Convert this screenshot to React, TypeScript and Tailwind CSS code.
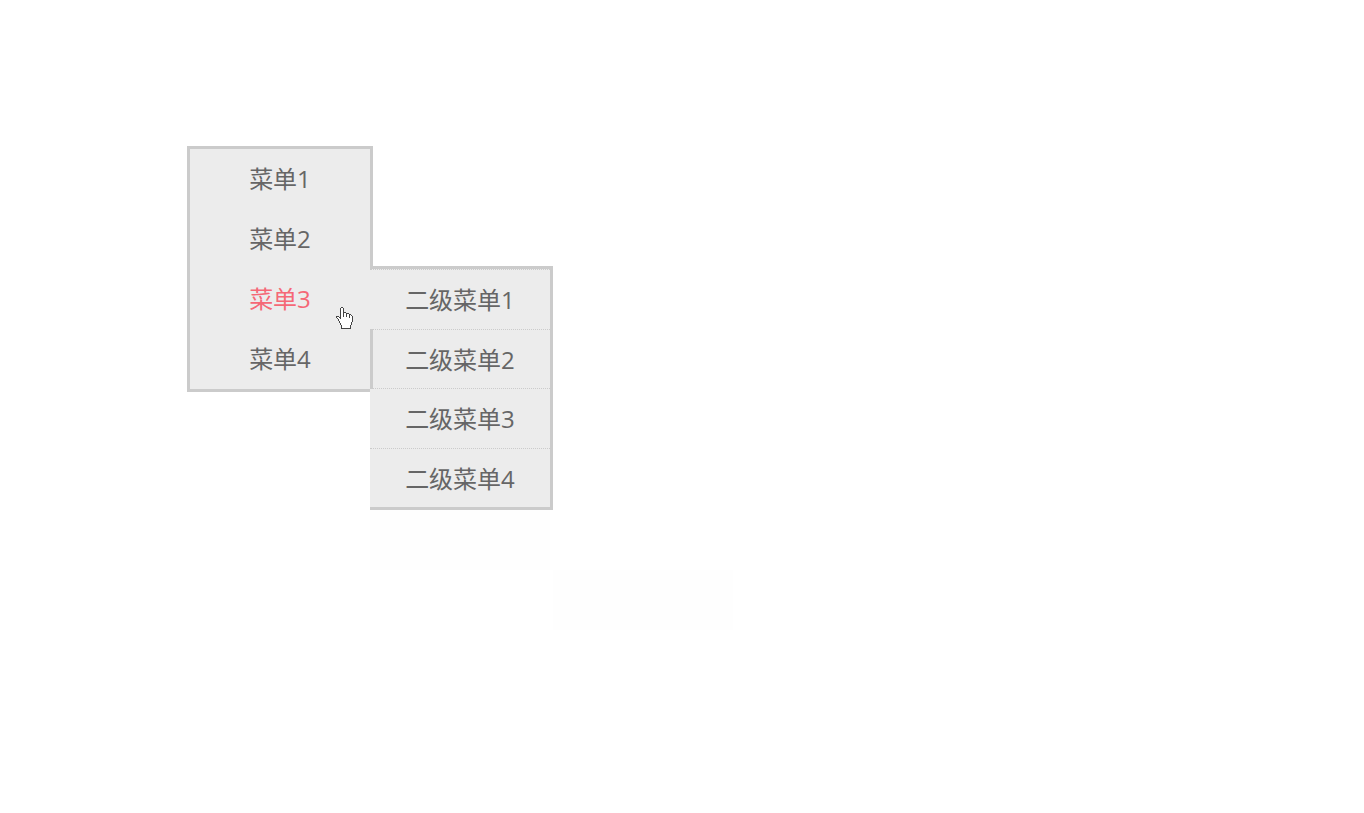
// src/App.tsx
import React from 'react';

const menus = ['菜单1', '菜单2', '菜单3', '菜单4'];
const subMenus = ['二级菜单1', '二级菜单2', '二级菜单3', '二级菜单4'];
const activeMenu = '菜单3';

function HandPointer() {
  return (
    <svg
      className="pointer-events-none absolute left-[146px] top-[38px] h-[22px] w-[17px]"
      viewBox="0 0 17 22"
      shapeRendering="crispEdges"
      aria-hidden="true"
    >
      <path
        d="M5 1H7V6H10V7H13V8H15V9H16V15H15V18H14V21H6V18H5V16H4V14H3V12H2V11H1V10H3V11H5Z"
        fill="#fff"
      />
      <path
        d="M5 0h2v1h-2z M4 1h1v11h-1z M7 1h1v9h-1z M8 5h2v1h-2z M10 6h1v4h-1z M11 6h2v1h-2z M13 7h1v4h-1z M14 7h1v1h-1z M15 8h1v1h-1z M16 9h1v6h-1z M15 15h1v3h-1z M14 18h1v3h-1z M5 21h10v1h-10z M5 18h1v3h-1z M4 16h1v2h-1z M3 14h1v2h-1z M2 12h1v2h-1z M1 11h1v1h-1z M0 9h1v2h-1z M1 9h2v1h-2z M3 10h1v1h-1z"
        fill="#444"
      />
    </svg>
  );
}

function SubMenu() {
  return (
    <div className="absolute -top-[3px] left-full">
      <ul className="grid h-[244px] w-[183px] grid-rows-4 border-y-[3px] border-r-[3px] border-[#cbcbcb] bg-[#ececec]">
        {subMenus.map((name) => (
          <li key={name} className="border-t border-dotted border-[#cbcbcb]">
            <a href="#" className="flex h-full items-center justify-center pt-0.5 text-[#666]">
              {name}
            </a>
          </li>
        ))}
      </ul>
      <div className="h-[60px] w-[180px] bg-[#fefefe]" />
      <div className="ml-[183px] h-[60px] w-[180px] bg-[#fefefe]" />
    </div>
  );
}

export default function App() {
  return (
    <div className="min-h-screen bg-white pl-[187px] pt-[146px] font-['Open_Sans','Noto_Sans_CJK_SC',sans-serif] text-2xl">
      <nav>
        <ul className="w-[186px] border-y-[3px] border-l-[3px] border-[#cbcbcb] bg-[#ececec]">
          {menus.map((name) => {
            const active = name === activeMenu;
            return (
              <li
                key={name}
                className={
                  active
                    ? 'relative border-r-[3px] border-[#ececec]'
                    : 'relative border-r-[3px] border-[#cbcbcb]'
                }
              >
                <a
                  href="#"
                  className={
                    active
                      ? 'block text-center leading-[60px] text-[#f56876]'
                      : 'block text-center leading-[60px] text-[#666]'
                  }
                >
                  {name}
                </a>
                {active && <SubMenu />}
                {active && <HandPointer />}
              </li>
            );
          })}
        </ul>
      </nav>
    </div>
  );
}
